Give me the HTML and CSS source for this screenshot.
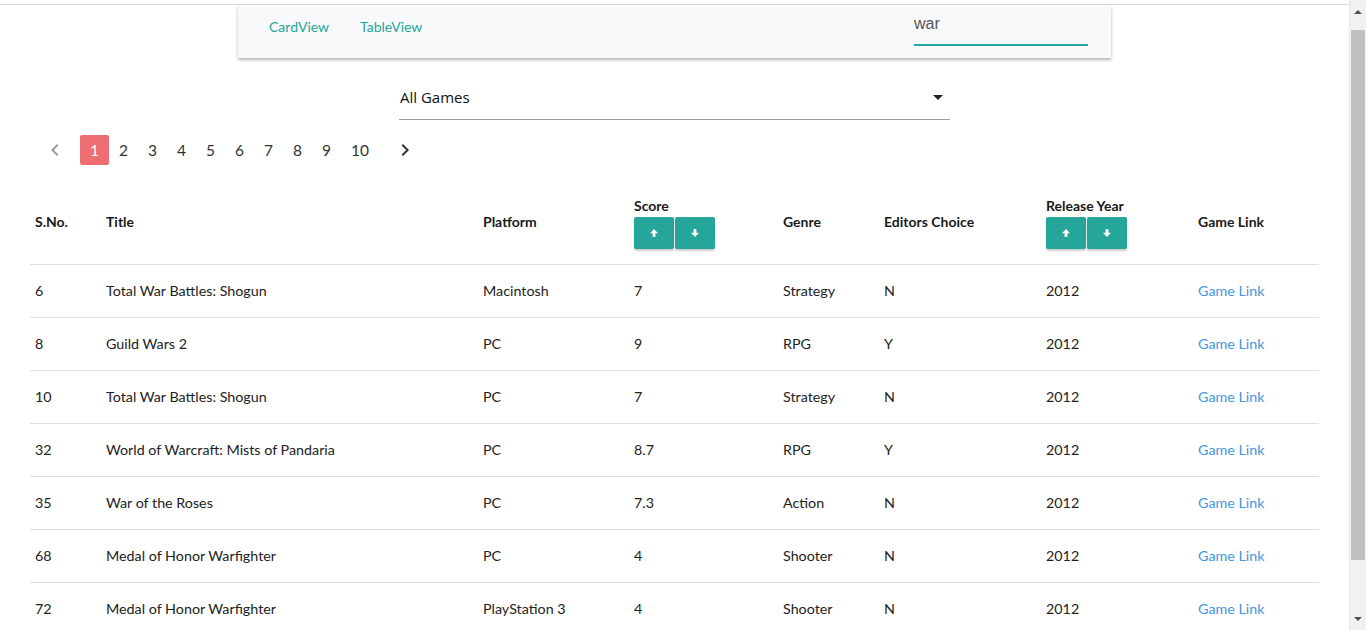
FILE: index.html
```html
<!DOCTYPE html>
<html lang="en">
<head>
<meta charset="utf-8">
<title>Games</title>
<link rel="stylesheet" href="styles.css">
</head>
<body>
<div class="page">
  <div class="topbar"></div>
  <nav class="navcard">
    <a class="navlink" href="#">CardView</a>
    <a class="navlink" href="#">TableView</a>
    <input class="search" type="text" value="war">
  </nav>

  <div class="select">
    <span class="select-text">All Games</span>
    <span class="caret"></span>
  </div>

  <main class="container">
    <ul class="pagination">
      <li class="chev disabled"><svg viewBox="0 0 24 24" width="24" height="24"><path d="M15.41 7.41L14 6l-6 6 6 6 1.41-1.41L10.83 12z"/></svg></li>
      <li class="page-num active">1</li>
      <li class="page-num">2</li>
      <li class="page-num">3</li>
      <li class="page-num">4</li>
      <li class="page-num">5</li>
      <li class="page-num">6</li>
      <li class="page-num">7</li>
      <li class="page-num">8</li>
      <li class="page-num">9</li>
      <li class="page-num">10</li>
      <li class="chev next"><svg viewBox="0 0 24 24" width="24" height="24"><path d="M10 6L8.59 7.41 13.170 12l-4.58 4.59L10 18l6-6z"/></svg></li>
    </ul>

    <table class="games">
      <colgroup>
        <col class="c1"><col class="c2"><col class="c3"><col class="c4"><col class="c5"><col class="c6"><col class="c7"><col class="c8">
      </colgroup>
      <thead>
        <tr>
          <th>S.No.</th>
          <th>Title</th>
          <th>Platform</th>
          <th><div class="th-label">Score</div>
            <div class="btn-group">
              <button class="btn"><svg viewBox="0 0 10 10" width="10" height="10"><path d="M5 1L9 5.2H6.4V9H3.6V5.2H1z"/></svg></button>
              <button class="btn"><svg viewBox="0 0 10 10" width="10" height="10"><path d="M5 9L9 4.8H6.4V1H3.6V4.8H1z"/></svg></button>
            </div>
          </th>
          <th>Genre</th>
          <th>Editors Choice</th>
          <th><div class="th-label">Release Year</div>
            <div class="btn-group">
              <button class="btn"><svg viewBox="0 0 10 10" width="10" height="10"><path d="M5 1L9 5.2H6.4V9H3.6V5.2H1z"/></svg></button>
              <button class="btn"><svg viewBox="0 0 10 10" width="10" height="10"><path d="M5 9L9 4.8H6.4V1H3.6V4.8H1z"/></svg></button>
            </div>
          </th>
          <th>Game Link</th>
        </tr>
      </thead>
      <tbody>
        <tr><td>6</td><td>Total War Battles: Shogun</td><td>Macintosh</td><td>7</td><td>Strategy</td><td>N</td><td>2012</td><td><a href="#">Game Link</a></td></tr>
        <tr><td>8</td><td>Guild Wars 2</td><td>PC</td><td>9</td><td>RPG</td><td>Y</td><td>2012</td><td><a href="#">Game Link</a></td></tr>
        <tr><td>10</td><td>Total War Battles: Shogun</td><td>PC</td><td>7</td><td>Strategy</td><td>N</td><td>2012</td><td><a href="#">Game Link</a></td></tr>
        <tr><td>32</td><td>World of Warcraft: Mists of Pandaria</td><td>PC</td><td>8.7</td><td>RPG</td><td>Y</td><td>2012</td><td><a href="#">Game Link</a></td></tr>
        <tr><td>35</td><td>War of the Roses</td><td>PC</td><td>7.3</td><td>Action</td><td>N</td><td>2012</td><td><a href="#">Game Link</a></td></tr>
        <tr><td>68</td><td>Medal of Honor Warfighter</td><td>PC</td><td>4</td><td>Shooter</td><td>N</td><td>2012</td><td><a href="#">Game Link</a></td></tr>
        <tr><td>72</td><td>Medal of Honor Warfighter</td><td>PlayStation 3</td><td>4</td><td>Shooter</td><td>N</td><td>2012</td><td><a href="#">Game Link</a></td></tr>
      </tbody>
    </table>
  </main>
</div>

<div class="scrollbar">
  <span class="sb-up"></span>
  <span class="sb-thumb"></span>
  <span class="sb-down"></span>
</div>
</body>
</html>
```

FILE: styles.css
```css
* { box-sizing: border-box; }

html, body {
  margin: 0;
  padding: 0;
  background: #fff;
}

body {
  font-family: Lato, "Liberation Sans", sans-serif;
  color: #222;
}

.page {
  width: 1349px;
}

.topbar {
  height: 5px;
  border-bottom: 1px solid #dcdcdc;
}

.navcard {
  width: 873px;
  height: 53px;
  margin: 0 auto;
  background: #f8f9fa;
  box-shadow: 0 2px 3px rgba(0, 0, 0, 0.3);
  display: flex;
  align-items: flex-start;
  padding: 9px 23px 0 31px;
  gap: 31px;
}

.navlink {
  color: #26a69a;
  text-decoration: none;
  font-size: 14px;
  line-height: 24px;
  margin-top: 1px;
}

.search {
  margin-left: auto;
  width: 174px;
  height: 32px;
  padding: 0 0 10px 0;
  border: none;
  border-bottom: 2px solid #26a69a;
  background: transparent;
  font-family: "Liberation Sans", Arial, sans-serif;
  font-size: 16px;
  line-height: 20px;
  color: #555;
  outline: none;
}

.select {
  width: 551px;
  height: 45px;
  margin: 17px auto 0;
  border-bottom: 1px solid #9e9e9e;
  display: flex;
  align-items: center;
  justify-content: space-between;
  padding: 0 7px 0 1px;
}

.select-text {
  font-family: "Open Sans", "Liberation Sans", sans-serif;
  font-size: 15px;
  color: #111;
}

.caret {
  width: 0;
  height: 0;
  border-left: 5px solid transparent;
  border-right: 5px solid transparent;
  border-top: 5px solid #222;
}

.container {
  margin: 0 30px 30px;
}

.pagination {
  list-style: none;
  margin: 15px 0 0;
  padding: 0 0 0 10px;
  display: flex;
  align-items: center;
  height: 30px;
}

.pagination li {
  height: 30px;
  line-height: 30px;
  border-radius: 2px;
}

.chev {
  width: 30px;
  display: flex;
  align-items: center;
  justify-content: center;
}

.chev.disabled { margin-right: 10px; }
.chev.disabled svg { fill: #999; }
.chev.next { margin-left: 11px; }
.chev.next svg { fill: #333; }

.page-num {
  padding: 0 10px;
  font-size: 15.5px;
  color: #333;
}

.page-num.active {
  background: #ee6e73;
  color: #fff;
}

.games {
  width: 100%;
  table-layout: fixed;
  border-collapse: collapse;
  margin-top: 15px;
  font-size: 14px;
}

.c1 { width: 71px; }
.c2 { width: 377px; }
.c3 { width: 151px; }
.c4 { width: 149px; }
.c5 { width: 101px; }
.c6 { width: 162px; }
.c7 { width: 152px; }
.c8 { width: 126px; }

.games tr {
  border-bottom: 1px solid #dddddd;
}

.games th,
.games td {
  padding: 15px 5px;
  text-align: left;
  vertical-align: middle;
  line-height: 22px;
}

.games th {
  font-weight: bold;
  color: #1a1a1a;
}

.games td {
  color: #222;
  font-size: 14.3px;
}

.th-label {
  line-height: 22px;
}

.btn-group {
  display: flex;
  gap: 1px;
}

.btn {
  width: 40px;
  height: 32px;
  border: none;
  border-radius: 2px;
  background: #26a69a;
  box-shadow: 0 2px 2px rgba(0, 0, 0, 0.2);
  display: flex;
  align-items: center;
  justify-content: center;
  padding: 0;
}

.btn svg { fill: #fff; }

.games a {
  color: #4297e2;
  text-decoration: none;
}

/* simulated classic window scrollbar */
.scrollbar {
  position: fixed;
  top: 0;
  right: 0;
  width: 17px;
  height: 100%;
  background: #f1f1f1;
  border-left: 1px solid #e8e8e8;
}

.sb-up,
.sb-down {
  position: absolute;
  left: 4px;
  width: 0;
  height: 0;
  border-left: 4px solid transparent;
  border-right: 4px solid transparent;
}

.sb-up {
  top: 10px;
  border-bottom: 4px solid #505050;
}

.sb-down {
  bottom: 9px;
  border-top: 4px solid #505050;
}

.sb-thumb {
  position: absolute;
  top: 30px;
  left: 1px;
  width: 14px;
  height: 530px;
  background: #c1c1c1;
}
```
